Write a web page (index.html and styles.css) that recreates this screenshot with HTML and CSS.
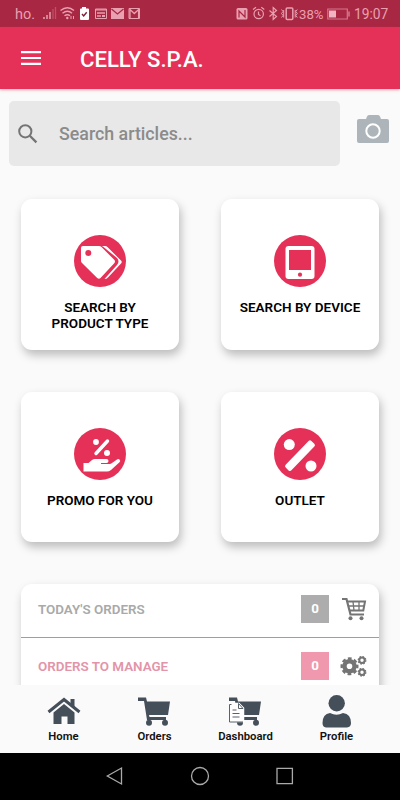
FILE: index.html
```html
<!DOCTYPE html>
<html lang="en">

<head>
    <meta charset="UTF-8">
    <meta name="viewport" content="width=device-width, initial-scale=1.0">
    <title>Celly S.P.A.</title>
    <link rel="stylesheet" href="styles.css">
</head>

<body>
    <!-- phone status bar -->
    <div class="status">
        <span class="carrier">ho.</span>
        <svg class="status-left" width="100" height="16" viewBox="43 6 100 16">
            <!-- signal -->
            <path d="M44 17v2M47 15v4M50 12v7" stroke="#e9a0b0" stroke-width="1.5" />
            <path d="M53 9v10M55.500 7v12" stroke="#bd5168" stroke-width="1.300" />
            <!-- wifi -->
            <g fill="none" stroke="#e9a0b0" stroke-width="1.400">
                <path d="M60.500 10.500q7-5.500 13.500 0M62.500 13.200q5-4 9.500 0M64.500 15.800q3-2.200 5.500 0" />
            </g>
            <circle cx="67.300" cy="18" r="1.200" fill="#e9a0b0" />
            <path d="M71 16v3M73.500 16v3" stroke="#e9a0b0" />
            <!-- battery check -->
            <path d="M82 7h4v1.500h2q1 0 1 1V19q0 1-1 1h-7q-1 0-1-1V9.500q0-1 1-1h1z" fill="#fff" />
            <path d="M82 14l1.700 2 3-3.800" fill="none" stroke="#7d2038" stroke-width="1.400" />
            <!-- news -->
            <path d="M95.500 9h11v9.500h-11z" fill="none" stroke="#e9a0b0" />
            <path d="M95 9.800h12M97 13h8M97 16h4" stroke="#e9a0b0" stroke-width="1.300" />
            <path d="M102 15h3v2h-3z" fill="#e9a0b0" />
            <!-- mails -->
            <path d="M111 8h13v11h-13z" fill="#e9a0b0" />
            <path d="M111.500 9l6 5 6-5" fill="none" stroke="#a82843" stroke-width="1.200" />
            <path d="M129 8.500h10.500v10H129z" fill="none" stroke="#e9a0b0" />
            <path d="M130 18.500V9.500l4.300 4 4.300-4v9" fill="none" stroke="#e9a0b0" stroke-width="1.300" />
        </svg>
        <svg class="status-right" width="63" height="16" viewBox="235 6 63 16">
            <!-- nfc -->
            <rect x="236.500" y="8" width="11" height="11.500" rx="1.500" fill="#e9a0b0" />
            <path d="M239 17.500v-6.500l6 6V10" fill="none" stroke="#a82742" stroke-width="1.200" />
            <!-- alarm -->
            <circle cx="258.700" cy="14" r="4.700" fill="none" stroke="#e9a0b0" stroke-width="1.200" />
            <path d="M258.500 11.500v3l2 1.200M253 9.500l3-2.200M264.300 9.500l-3-2.200" fill="none" stroke="#e9a0b0" stroke-width="1.200" />
            <!-- bluetooth -->
            <path d="M269.500 10.500l7 6-3.300 3V7.500l3.300 3-7 6" fill="none" stroke="#e9a0b0" stroke-width="1.200" />
            <!-- vibrate -->
            <rect x="286.200" y="8" width="6.600" height="11.500" rx="1" fill="none" stroke="#e9a0b0" stroke-width="1.500" />
            <path d="M281.500 9.500l1.500 2-1.500 2 1.500 2-1.500 2M283.700 10v7.500M297.300 9.500l-1.500 2 1.500 2-1.500 2 1.500 2M295.200 10v7.500" fill="none" stroke="#e9a0b0" />
        </svg>
        <span class="percent">38%</span>
        <svg class="battery" width="24" height="12" viewBox="0 0 24 12">
            <path d="M.8 1h19.500v10H.8z" fill="none" stroke="#d5798d" stroke-width="1.200" />
            <path d="M2 2.500h7v7H2z" fill="#f0b5c1" />
            <path d="M22 3.500v5" stroke="#d5798d" stroke-width="1.500" />
        </svg>
        <span class="clock">19:07</span>
    </div>

    <!-- title bar -->
    <header class="header">
        <svg width="20" height="14" viewBox="0 0 20 14">
            <path d="M0 1.100h20M0 7h20M0 12.900h20" stroke="#fff" stroke-width="2.100" />
        </svg>
        <h1>CELLY S.P.A.</h1>
    </header>

    <main class="content">
        <!-- search -->
        <div class="search-row">
            <div class="search">
                <svg width="20" height="20" viewBox="0 0 20 20" fill="none" stroke="#747474">
                    <circle cx="7.300" cy="7.300" r="6.100" stroke-width="2" />
                    <path d="M11.800 11.800l6.600 6.600" stroke-width="2.300" />
                </svg>
                <span>Search articles...</span>
            </div>
            <svg class="camera" width="32" height="28" viewBox="0 0 32 28">
                <path d="M2 4h7l1-2.500Q10.500 0 12 0h9q1.500 0 2 1.500L24 4h6q2 0 2 2v20q0 2-2 2H2q-2 0-2-2V6q0-2 2-2z" fill="#adb5bb" />
                <circle cx="16" cy="16" r="6.700" fill="none" stroke="#fff" stroke-width="2" />
            </svg>
        </div>

        <!-- menu cards -->
        <div class="cards">
            <div class="card">
                <svg width="52" height="52" viewBox="0 0 52 52">
                    <circle cx="26" cy="26" r="26" fill="#e53158" />
                    <path d="M9 11h16q1.500 0 2.500 1L40 24.500q2 2 0 4L26.500 43Q25 44.500 23.200 43L8 28q-1-1-1-2V13q0-2 2-2z" fill="#fff" />
                    <path d="M28 11h3q1.500 0 2.500 1L47 25.500q1.500 1.500 0 3L34 42.500Q32.500 44 30.500 44L43 30q3-3.500 0-7L29.500 12z" fill="#fff" />
                    <circle cx="14.300" cy="18" r="3" fill="#e53158" />
                </svg>
                <p>SEARCH BY<br>PRODUCT TYPE</p>
            </div>
            <div class="card">
                <svg width="52" height="52" viewBox="0 0 52 52">
                    <circle cx="26" cy="26" r="26" fill="#e53158" />
                    <rect x="11.500" y="11" width="29" height="33" rx="3" fill="#fff" />
                    <path d="M15 15h22v20H15z" fill="#e53158" />
                    <circle cx="26" cy="39.700" r="2.100" fill="#e53158" />
                </svg>
                <p>SEARCH BY DEVICE</p>
            </div>
            <div class="card">
                <svg width="52" height="52" viewBox="0 0 52 52">
                    <circle cx="26" cy="26" r="26" fill="#e53158" />
                    <g fill="#fff">
                        <circle cx="22" cy="14" r="2.900" />
                        <circle cx="33" cy="25" r="3" />
                        <path d="M9.500 35h5l3.500-3q1.500-1 3-1h11.500q2 0 2 2t-2 2H27v1h8.500q1.500 0 2.500-1l5-3.500q1.300-1 2.500 0 1.500 1.500 0 2.700L37 42q-2 1.500-4 1.500H9.500z" />
                    </g>
                    <path d="M22 25.500L33.500 13" stroke="#fff" stroke-width="3.400" stroke-linecap="round" />
                </svg>
                <p>PROMO FOR YOU</p>
            </div>
            <div class="card">
                <svg width="52" height="52" viewBox="0 0 52 52">
                    <circle cx="26" cy="26" r="26" fill="#e53158" />
                    <circle cx="15.300" cy="16.600" r="5.500" fill="#fff" />
                    <circle cx="37" cy="38" r="5.500" fill="#fff" />
                    <rect x="7.500" y="23.700" width="37" height="8" rx="2" fill="#fff" transform="rotate(-46 26 27.700)" />
                </svg>
                <p>OUTLET</p>
            </div>
        </div>

        <!-- orders summary -->
        <div class="summary">
            <div class="summary-row">
                <span class="label">TODAY'S ORDERS</span>
                <span class="count">0</span>
                <svg width="26" height="24" viewBox="0 0 26 24" fill="none" stroke="#747474">
                    <path d="M1 2h4.500l4 15.500H23" stroke-width="2.200" />
                    <path d="M6 4.500h18l-1.700 9H8" stroke-width="2" />
                    <path d="M7 9h16M12 4.500l1 9M18 4.500v9" stroke-width="1.300" />
                    <circle cx="9.500" cy="21.300" r="2" fill="#747474" stroke="none" />
                    <circle cx="20.500" cy="21.300" r="2" fill="#747474" stroke="none" />
                </svg>
            </div>
            <div class="summary-row manage">
                <span class="label">ORDERS TO MANAGE</span>
                <span class="count">0</span>
                <svg width="28" height="24" viewBox="0 0 28 24" fill="none" stroke="#747474">
                    <circle cx="9.500" cy="12.300" r="5" stroke-width="4.400" />
                    <circle cx="9.500" cy="12.300" r="7.800" stroke-width="2.400" stroke-dasharray="3.700 2.426" stroke-dashoffset="1.850" />
                    <circle cx="22" cy="6.300" r="2.700" stroke-width="2" />
                    <circle cx="22" cy="6.300" r="3.800" stroke-width="1.300" stroke-dasharray="1.600 1.384" />
                    <circle cx="22" cy="18.300" r="2.700" stroke-width="2" />
                    <circle cx="22" cy="18.300" r="3.800" stroke-width="1.300" stroke-dasharray="1.600 1.384" />
                </svg>
            </div>
        </div>
    </main>

    <!-- bottom tabs -->
    <nav class="tabs">
        <div class="tab">
            <svg width="34" height="34" viewBox="0 0 34 34" fill="#454f59">
                <path d="M1.500 17L17 4.500 32.500 17" fill="none" stroke="#454f59" stroke-width="3" />
                <path d="M23.500 4h4v10l-4-3.500zM6.500 17.500L17 9l10.500 8.500V29h-7v-7.500h-6V29h-8z" />
            </svg>
            <span>Home</span>
        </div>
        <div class="tab">
            <svg width="34" height="34" viewBox="0 0 34 34" fill="#454f59">
                <path d="M0 2.500h8l1 4h23L30 20H11l.5 2H28v3H9L6 6H0z" />
                <circle cx="11" cy="27.700" r="3" />
                <circle cx="27" cy="27.700" r="3" />
            </svg>
            <span>Orders</span>
        </div>
        <div class="tab">
            <svg width="34" height="34" viewBox="0 0 34 34" fill="#454f59">
                <path d="M0 2.500h8l1 4h23L30 20H11l.5 2H28v3H9L6 6H0z" />
                <circle cx="11" cy="27.700" r="3" />
                <circle cx="27" cy="27.700" r="3" />
                <path d="M.5 8.500H10l4.500 4.500v13.500H.5z" fill="#fff" stroke="#fff" stroke-width="1.500" />
                <path d="M2.500 9.500H.5V27H14M9.500 8.500l4.500 5H9.500z" fill="none" stroke="#59626b" />
                <path d="M3.500 15h4M3.500 18.500h7M3.500 22h7" stroke="#59626b" stroke-width="1.200" />
            </svg>
            <span>Dashboard</span>
        </div>
        <div class="tab">
            <svg width="34" height="34" viewBox="0 0 34 34" fill="#454f59">
                <circle cx="16.700" cy="8.300" r="8.200" />
                <path d="M10 18q6.500 3.500 13 0 8 1 8 10 0 4-4 4.500H6q-3.500-.500-3.500-4.500 0-9 7.500-10z" />
            </svg>
            <span>Profile</span>
        </div>
    </nav>

    <!-- android buttons -->
    <footer class="softkeys">
        <svg width="20" height="20" viewBox="0 0 20 20">
            <path d="M2.300 10L16.500 2v16z" />
        </svg>
        <svg width="20" height="20" viewBox="0 0 20 20">
            <circle cx="10" cy="10" r="8.500" />
        </svg>
        <svg width="20" height="20" viewBox="0 0 20 20">
            <path d="M2 2.300h15.400v15.400H2z" />
        </svg>
    </footer>
</body>

</html>
```
FILE: styles.css
```css
* {
    box-sizing: border-box;
}

body {
    margin: 0;
    height: 800px;
    overflow: hidden;
    display: flex;
    flex-direction: column;
    background: #fafafa;
    font-family: Roboto, sans-serif;
}

svg {
    display: block;
    flex: none;
}

.status {
    flex: none;
    display: flex;
    align-items: center;
    height: 27px;
    padding: 1px 0 0 15px;
    background: #a82742;
    color: #e9a0b0;
    font-size: 14.5px;
    white-space: nowrap;
}

.carrier {
    width: 28px;
}

.status-right {
    margin-left: 92px;
}

.percent {
    width: 28px;
    margin-left: 1px;
    font-size: 13.2px;
}

.clock {
    margin-left: 3px;
    font-size: 13.8px;
}

.header {
    flex: none;
    display: flex;
    align-items: center;
    height: 62px;
    padding: 0 21px 0 21px;
    background: #e53158;
    box-shadow: 0 1px 3px rgba(229, 49, 88, 0.4);
    z-index: 1;
}

.header h1 {
    margin: 2px 0 0 39px;
    color: #fff;
    font-size: 22.1px;
    font-weight: 500;
}

.content {
    flex: 1;
    min-height: 0;
    overflow: hidden;
    padding-top: 12px;
}

.search-row {
    display: flex;
    padding: 0 11px 0 9px;
    justify-content: space-between;
}

.search {
    display: flex;
    align-items: center;
    width: 331px;
    height: 65px;
    padding-left: 9px;
    border-radius: 5px;
    background: #e8e8e8;
}

.search span {
    margin-left: 21px;
    color: #8b8b8b;
    font-size: 17.8px;
    font-weight: 500;
}

.camera {
    margin-top: 14px;
}

/* 2x2 menu */
.cards {
    display: grid;
    grid-template-columns: 158px 158px;
    gap: 42px;
    padding: 33px 21px 0;
}

.card {
    display: flex;
    flex-direction: column;
    align-items: center;
    height: 150.5px;
    padding-top: 36px;
    border-radius: 11px;
    background: #fff;
    box-shadow: 2px 5px 10px rgba(0, 0, 0, 0.25);
}

.card p {
    margin: 13px 0 0;
    color: #000;
    font-size: 13.5px;
    font-weight: 600;
    line-height: 15.5px;
    text-align: center;
}

.summary {
    height: 160px;
    margin: 42px 21px 0;
    border-radius: 11px;
    background: #fff;
    box-shadow: 2px 5px 10px rgba(0, 0, 0, 0.25);
}

.summary-row {
    display: flex;
    align-items: center;
    height: 54px;
    padding: 0 12px 3px 17px;
    border-bottom: 1px solid #9e9e9e;
    color: #a9a9a9;
    font-size: 13.4px;
    font-weight: 600;
}

.summary-row .label {
    flex: 1;
}

.count {
    width: 28px;
    height: 28px;
    margin-right: 12px;
    background: #adadad;
    color: #fff;
    font-weight: 700;
    line-height: 28px;
    text-align: center;
}

.manage {
    height: 57px;
    padding: 0 11px 0 17px;
    color: #e294a8;
}

.manage .count {
    margin-right: 11px;
    background: #f098ad;
}

.tabs {
    flex: none;
    display: grid;
    grid-template-columns: repeat(4, 91px);
    justify-content: center;
    height: 68px;
    padding-top: 10px;
    background: #fafafa;
    z-index: 1;
}

.tab {
    display: flex;
    flex-direction: column;
    align-items: center;
    color: #111;
    font-size: 11.3px;
    font-weight: 600;
    line-height: 15px;
}

.softkeys {
    flex: none;
    display: flex;
    justify-content: center;
    gap: 65px;
    height: 47px;
    padding-top: 13px;
    background: #000;
}

.softkeys svg {
    fill: none;
    stroke: #aaa;
    stroke-width: 1.3;
}
```
